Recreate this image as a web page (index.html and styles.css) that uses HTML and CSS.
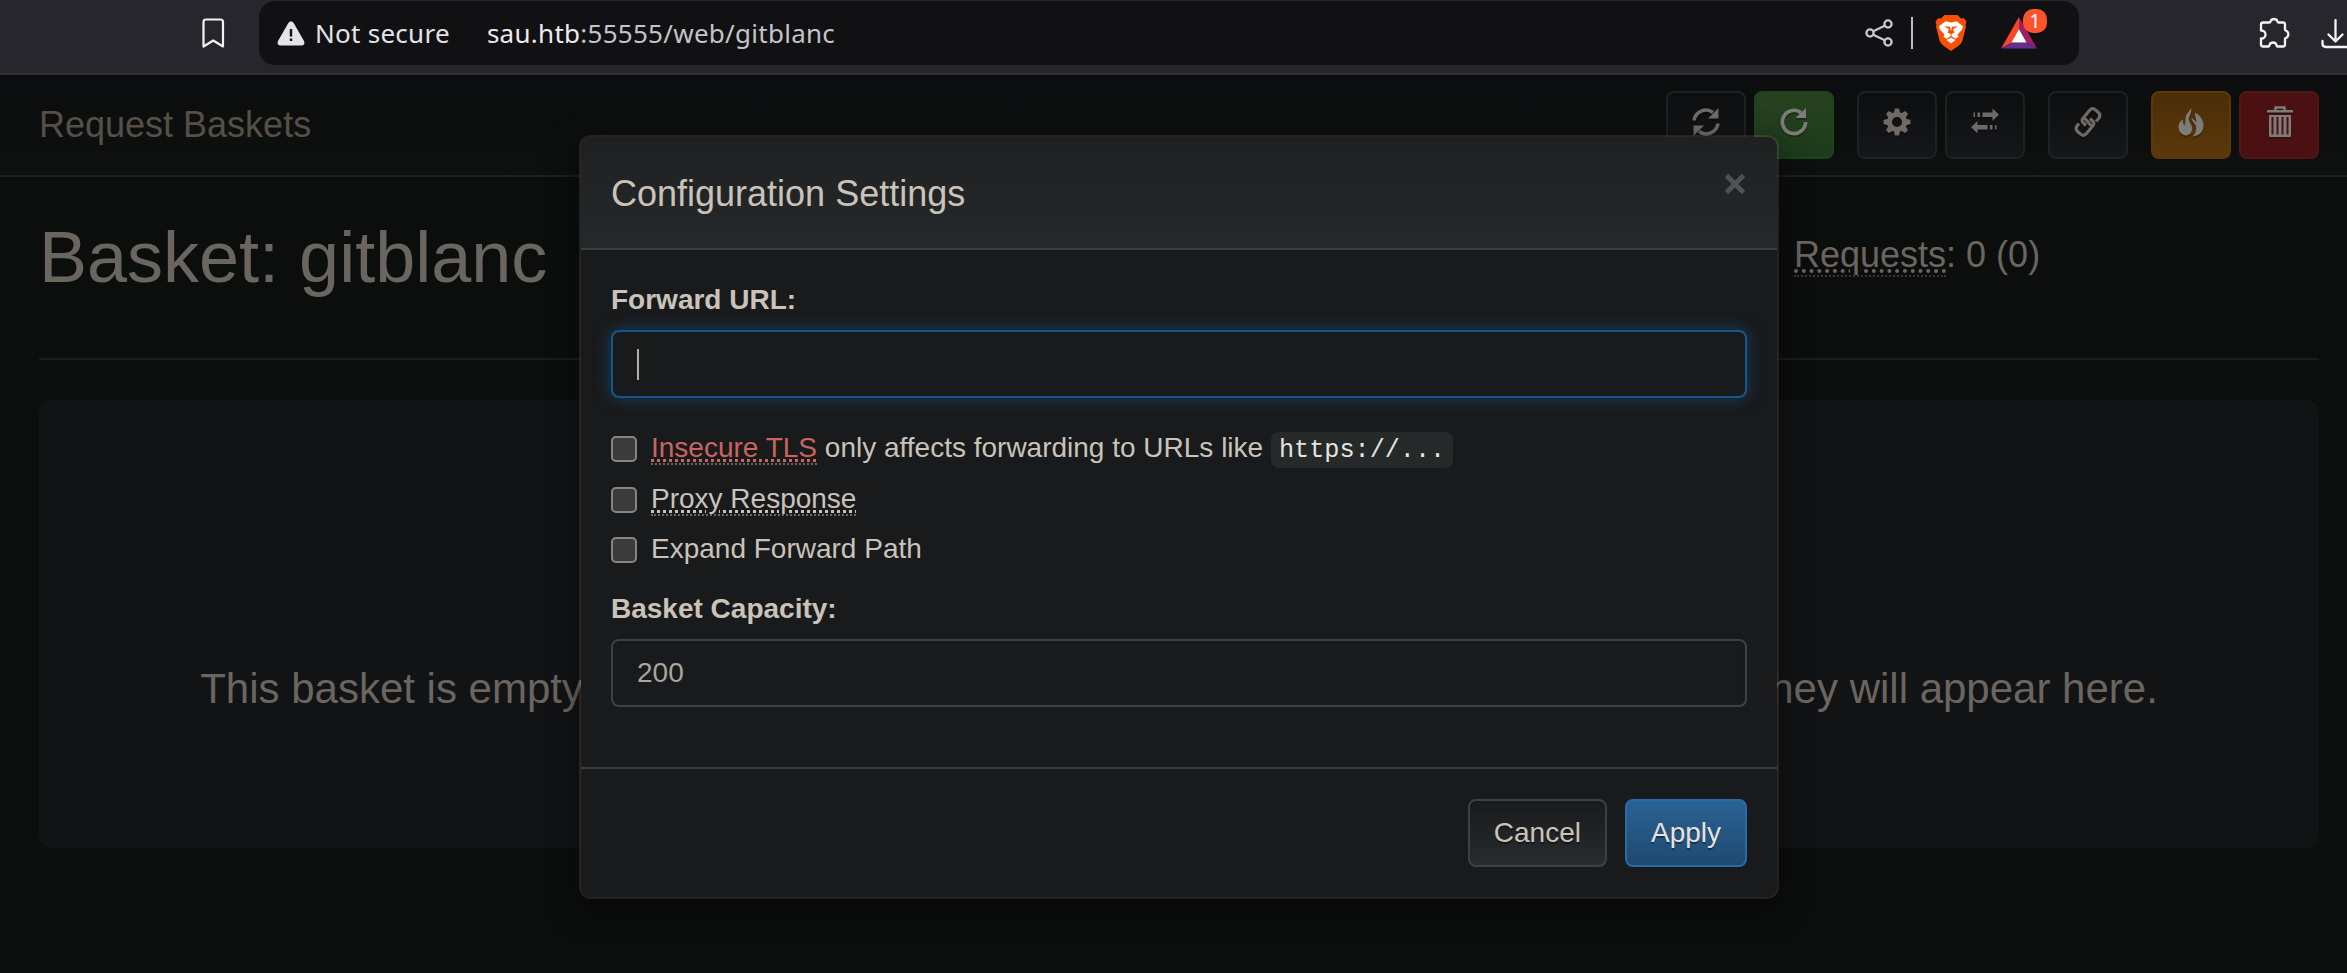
FILE: index.html
```html
<!DOCTYPE html>
<html lang="en">
<head>
<meta charset="utf-8">
<title>Request Baskets</title>
<link rel="stylesheet" href="styles.css">
</head>
<body>
<header class="chrome">
  <svg class="ic-bookmark" viewBox="0 0 24 32" width="24" height="32"><path d="M2.500 29.500V5Q2.500 2.500 5 2.500H19.500Q22 2.500 22 5V29.500L12.250 23.500Z" fill="none" stroke="#f4f4f6" stroke-width="2.200" stroke-linejoin="round"/></svg>
  <div class="urlbar">
    <svg class="ic-warn" viewBox="0 0 28 25" width="28" height="25"><path d="M11.500 1.800Q14-1.500 16.500 1.800L27 20Q28.500 24.500 24.500 24.500H3.500Q-.5 24.500 1 20Z" fill="#e4e3e9"/><path d="M14 8V15.500M14 17.500V20" stroke="#121214" stroke-width="2.400"/></svg>
    <span class="insecure">Not secure</span>
    <span class="url"><b>sau.htb</b>:55555/web/gitblanc</span>
    <svg class="ic-share" viewBox="0 0 28 30" width="28" height="30" fill="none" stroke="#c9c8cd" stroke-width="2.300"><circle cx="5" cy="15" r="3.600"/><circle cx="23" cy="6" r="3.600"/><circle cx="23" cy="24" r="3.600"/><path d="M8.200 13.300 19.800 7.700M8.200 16.700 19.800 22.300"/></svg>
    <i class="divider"></i>
    <svg class="ic-brave" viewBox="0 0 32 38" width="32" height="36" preserveAspectRatio="none"><path d="M9.500 0H22.500L26 3.600 29 3.300 31.500 7 30.500 10.500 31 12 27.500 27Q26.500 30.500 23.500 32.500L16 38 8.500 32.500Q5.500 30.500 4.500 27L1 12 1.500 10.500.5 7 3 3.300 6 3.600Z" fill="#fb4f05"/><path d="M16 8 21.500 6.700 28 12 27 15.500 22.500 20.500 23.500 23 20.500 25 16.500 22.500V20L19.500 18.500 18 15 23 12 17 12.500 16 17 15 12.500 9 12 14 15 12.500 18.500 15.500 20V22.500L11.500 25 8.500 23 9.500 20.500 5 15.500 4 12 10.500 6.700Z" fill="#fff"/><path d="M16 24 20.500 26.500 16 30 11.500 26.500Z" fill="#fff"/></svg>
    <span class="bat">
      <svg viewBox="0 0 36 34" width="36" height="32" preserveAspectRatio="none"><path d="M18 0V14L11 27 0 33.500Z" fill="#fb4524"/><path d="M18 0 36 33.500 25 27 18 14Z" fill="#9e1f63"/><path d="M0 33.500 11 27H25L36 33.500Z" fill="#662d91"/><path d="M18 13 25.500 27H10.500Z" fill="#fff"/></svg>
      <em class="badge">1</em>
    </span>
  </div>
  <svg class="ic-ext" viewBox="0 0 32 34" width="32" height="34"><path d="M4.500 6.500H10.500Q11.500 6.500 11.500 5.500A3.700 3.700 0 0 1 18.500 5.500Q18.500 6.500 19.500 6.500H24Q26 6.500 26 8.500V13.500Q26 14.500 27 14.700A4 4 0 0 1 27 22Q26 22 26 23V28.500Q26 30.500 24 30.500H18.500Q17.500 30.500 17.500 29A3.700 3.700 0 0 0 10.500 29Q10.500 30.500 9.500 30.500H4Q2 30.500 2 28.500V22.500H2.500A4 4 0 0 0 2.500 14.500H2V8.500Q2 6.500 4.500 6.500Z" fill="none" stroke="#f4f4f6" stroke-width="2.300" stroke-linejoin="round"/></svg>
  <svg class="ic-dl" viewBox="0 0 27 32" width="27" height="32"><path d="M15.500 1V22M8.500 15.500 15.500 22.500 22.500 15.500M2.500 22V24.500Q2.500 28 6 28H27" fill="none" stroke="#f4f4f6" stroke-width="2.300" stroke-linecap="round" stroke-linejoin="round"/></svg>
</header>

<main class="page">
  <nav class="navbar">
    <a class="brand">Request Baskets</a>
    <div class="tools">
      <div class="group">
        <button class="tool"><svg viewBox="0 0 28 28"><path d="M2 12.500A12 12 0 0 1 21 4.500M26 15.500A12 12 0 0 1 7 23.500" fill="none" stroke="currentColor" stroke-width="3.500"/><path d="M26.500 0V10.500H16ZM1.500 28V17.500H12Z" fill="currentColor"/></svg></button>
        <button class="tool green"><svg viewBox="0 0 28 28"><path d="M25.600 14A11.600 11.600 0 1 1 21 4.700" fill="none" stroke="currentColor" stroke-width="3.600"/><path d="M26 0V10H15.500Z" fill="currentColor"/></svg></button>
      </div>
      <div class="group">
        <button class="tool"><svg viewBox="0 0 28 28"><g fill="currentColor"><path d="M12 .5H16L17.200 5H10.800ZM12 27.500H16L17.200 23H10.800Z"/><path d="M12 .5H16L17.200 5H10.800ZM12 27.500H16L17.200 23H10.800Z" transform="rotate(45 14 14)"/><path d="M12 .5H16L17.200 5H10.800ZM12 27.500H16L17.200 23H10.800Z" transform="rotate(90 14 14)"/><path d="M12 .5H16L17.200 5H10.800ZM12 27.500H16L17.200 23H10.800Z" transform="rotate(135 14 14)"/></g><circle cx="14" cy="14" r="7.500" fill="none" stroke="currentColor" stroke-width="5"/></svg></button>
        <button class="tool"><svg viewBox="0 0 28 28"><path d="M2.500 4.500H4V9H2.500ZM6.500 4.500H9V9H6.500ZM11.500 4.500H21.500V.5L28 6.700 21.500 13V9H11.500ZM25.500 17H24V21.500H25.500ZM21.500 17H19V21.500H21.500ZM16.500 17H6.500V13L0 19.200 6.500 25.500V21.500H16.500Z" fill="currentColor"/></svg></button>
      </div>
      <div class="group">
        <button class="tool"><svg viewBox="0 0 28 28"><path d="M12 17.500 8.500 14Q7.500 12.500 8.500 11L15.500 2.500Q18-.5 21 1.500L24.500 4.500Q27 7 25 10L22 13.500M16 10.500 19.500 14Q20.500 15.500 19.500 17L12.500 25.500Q10 28.500 7 26.500L3.500 23.500Q1 21 3 18L5 15.500M11 10.500 17 17.500" fill="none" stroke="currentColor" stroke-width="3.200"/></svg></button>
      </div>
      <div class="group">
        <button class="tool amber"><svg viewBox="0 0 28 28"><path d="M14 0C15.500 5 11 8.500 12 12.500C13 16 16 18 15 22C14.500 25 12.500 27 9.500 27.500C5 27.500 1.500 23.500 1.500 19C1.500 15 3.500 12.500 6 11.500C5.500 14 6 16 7.500 17.500C9 15 8 12.500 8.500 9.500C9 5.500 12.500 4 14 0ZM18 4.500C23.500 7.500 26.500 12 26.500 18C26.500 23.500 22.500 27.500 15.500 28.500C18 26 20 23 19 18.500C18 15 14.500 13.500 14.500 9.500C16 12 18.500 12 19.500 14.500C19.500 11 17.500 8 18 4.500Z" fill="currentColor"/></svg></button>
        <button class="tool red"><svg class="trash" viewBox="0 0 28 32"><path d="M9.500 5V2.500H18.500V5" fill="none" stroke="currentColor" stroke-width="2.500"/><path d="M1 5H27V7.500H1ZM3 10H25V31Q25 32 24 32H4Q3 32 3 31Z" fill="currentColor"/><path d="M6.500 12V29.500M11.500 12V29.500M16.500 12V29.500M21.500 12V29.500" stroke="#4b1011" stroke-width="2"/></svg></button>
      </div>
    </div>
  </nav>

  <div class="content">
    <div class="heading">
      <h1>Basket: gitblanc</h1>
      <h4><abbr class="dim">Requests</abbr>: 0 (0)</h4>
    </div>
    <div class="jumbotron"><p>This basket is empty, send requests to <kbd>http://sau.htb:55555/gitblanc</kbd> and they will appear here.</p></div>
  </div>
</main>

<section class="modal">
  <div class="modal-header"><h4>Configuration Settings</h4><svg class="close" viewBox="0 0 22 22" width="22" height="22"><path d="M2.500 2.500 19.500 19.500M19.500 2.500 2.500 19.500" stroke="#4f5152" stroke-width="4.800"/></svg></div>
  <div class="modal-body">
    <label class="title">Forward URL:</label>
    <div class="field focus"><i class="caret"></i></div>
    <div class="check first"><i class="box"></i><span><abbr class="danger">Insecure TLS</abbr> only affects forwarding to URLs like <code>https://...</code></span></div>
    <div class="check"><i class="box"></i><span><abbr>Proxy Response</abbr></span></div>
    <div class="check last"><i class="box"></i><span>Expand Forward Path</span></div>
    <label class="title">Basket Capacity:</label>
    <div class="field">200</div>
  </div>
  <div class="modal-footer"><button class="btn">Cancel</button><button class="btn primary">Apply</button></div>
</section>
</body>
</html>
```
FILE: styles.css
```css
* { box-sizing: border-box; }
body {
  margin: 0;
  width: 2347px;
  height: 973px;
  overflow: hidden;
  position: relative;
  background: #0c0e0d;
  font: 28px/40px "Liberation Sans", Arial, sans-serif;
  color: #6b6560;
}
svg { display: block; flex: none; }
h1, h4, p { margin: 0; font-weight: 400; }
button { font: inherit; margin: 0; padding: 0; cursor: pointer; }

/* Browser toolbar */
.chrome {
  height: 75px;
  padding: 1px 0 0 201px;
  display: flex;
  align-items: flex-start;
  background: #27262c;
  border-bottom: 2px solid #323136;
  font-family: "Noto Sans", sans-serif;
}
.ic-bookmark { margin-top: 16px; }
.urlbar {
  width: 1820px;
  height: 64px;
  margin-left: 34px;
  padding-left: 18px;
  display: flex;
  align-items: center;
  background: #111113;
  border-radius: 16px;
  font-size: 26px;
  letter-spacing: .27px;
  color: #c4c3c8;
}
.insecure { margin-left: 10px; color: #e4e3e9; }
.url { margin-left: 37px; }
.url b { font-weight: 400; color: #ecebf0; }
.ic-share { margin-left: auto; }
.divider { width: 2px; height: 32px; margin-left: 18px; background: #bdbcc2; }
.ic-brave { margin-left: 22px; }
.bat { position: relative; margin: 0 42px 0 34px; }
.badge {
  position: absolute;
  left: 22px;
  top: -8px;
  width: 24px;
  height: 24px;
  border-radius: 10px;
  background: #fb542b;
  color: #fff;
  font: 20px/24px "Noto Sans", sans-serif;
  text-align: center;
}
.ic-ext { margin: 15px 0 0 180px; }
.ic-dl { margin: 18px 0 0 29px; }

/* Page behind the dialog */
.navbar {
  height: 102px;
  padding: 0 28px 0 39px;
  display: flex;
  justify-content: space-between;
  align-items: center;
  background: linear-gradient(#0b0d0e, #0e100f);
  border-bottom: 2px solid #1c1f20;
}
.brand { font-size: 36px; color: #554f47; }
.tools { display: flex; gap: 23.2px; }
.group { display: flex; gap: 7.8px; }
.tool {
  width: 80px;
  height: 68px;
  padding: 0 0 6px;
  display: flex;
  align-items: center;
  justify-content: center;
  color: #706a65;
  background: linear-gradient(#0c0e0f, #15171a);
  border: 2px solid #1e2022;
  border-radius: 8px;
}
.tool svg { width: 28px; height: 28px; overflow: visible; filter: drop-shadow(0 2px 0 rgba(0, 0, 0, .25)); }
.tool .trash { height: 32px; margin: 0 0 3px 2px; }
.green { color: #7d7c79; background: linear-gradient(#28421f, #1c3b1b); border-color: #1f421e; }
.amber { color: #7d7c79; background: linear-gradient(#4a2d08, #5b380a); border-color: #5c390a; }
.red { color: #7d7c79; background: #4b1011; border-color: #551516; }
.content { padding: 0 28px 0 39px; }
.heading {
  height: 183px;
  display: flex;
  align-items: flex-start;
  border-bottom: 2px solid #1a1d1e;
}
.heading h1 { width: 1755px; padding-top: 40px; font-size: 72px; line-height: 80px; }
.heading h4 { padding-top: 58px; font-size: 36px; line-height: 40px; }
.jumbotron {
  height: 448px;
  margin-top: 40px;
  padding-top: 259px;
  border-radius: 12px;
  background: #111314;
  text-align: center;
}
.jumbotron p { font-size: 42px; line-height: 60px; white-space: nowrap; }
kbd { padding: 4px 41px; font: 37.8px/42px "Liberation Mono", monospace; }
abbr {
  text-decoration: underline dotted 3px;
  border-bottom: 2px dotted #6b655b;
}
.dim { text-decoration-thickness: 4px; border-color: #3a3733; }

/* Dialog */
.modal {
  position: absolute;
  left: 579px;
  top: 135px;
  width: 1200px;
  border: 2px solid rgba(140, 125, 110, .2);
  border-radius: 12px;
  background: #191a1c;
  background-clip: padding-box;
  box-shadow: 0 10px 30px rgba(0, 0, 0, .5);
  color: #c9c3ba;
}
.modal-header {
  height: 113px;
  padding: 30px;
  display: flex;
  justify-content: space-between;
  background: linear-gradient(#1f2021, #25292b);
  border-bottom: 2px solid #3b3f41;
  border-radius: 10px 10px 0 0;
}
.modal-header h4 { font-size: 36px; line-height: 53px; }
.close { margin: 6px 1px 0 0; }
.modal-body { padding: 30px; }
.title { display: block; margin-bottom: 10px; font-weight: 700; }
.field {
  height: 68px;
  margin-bottom: 30px;
  padding: 12px 24px;
  border: 2px solid #3c4244;
  border-radius: 8px;
  color: #aca59a;
  box-shadow: inset 0 2px 2px rgba(0, 0, 0, .075);
}
.focus { border-color: #14568d; box-shadow: 0 0 16px rgba(20, 90, 140, .6); }
.caret { display: block; width: 2px; height: 31px; margin-top: 5px; background: #b5aea4; }
.check { height: 40px; margin-bottom: 10px; display: flex; align-items: flex-start; }
.check.first { margin-bottom: 11px; }
.check.last { margin-bottom: 20px; }
.box {
  width: 26px;
  height: 26px;
  margin: 8px 14px 0 0;
  border: 2px solid #858585;
  border-radius: 5px;
  background: #3b3b3b;
}
.danger { color: #c96561; }
code {
  padding: 4px 8px 3px;
  border-radius: 8px;
  background: #25292a;
  color: #e6e3df;
  font: 25.2px/28px "Liberation Mono", monospace;
}
.modal-footer {
  padding: 30px;
  display: flex;
  justify-content: flex-end;
  gap: 18px;
  border-top: 2px solid #363d3e;
}
.btn {
  height: 68px;
  padding: 0 24px;
  border: 2px solid #3c4143;
  border-radius: 8px;
  background: linear-gradient(#191a1c, #282c2e);
  color: #c9c3ba;
  text-shadow: 0 2px 0 rgba(0, 0, 0, .4);
}
.primary { color: #e6e3df; border-color: #2a6ba5; background: linear-gradient(#2a6194, #1f4a70); }
```
